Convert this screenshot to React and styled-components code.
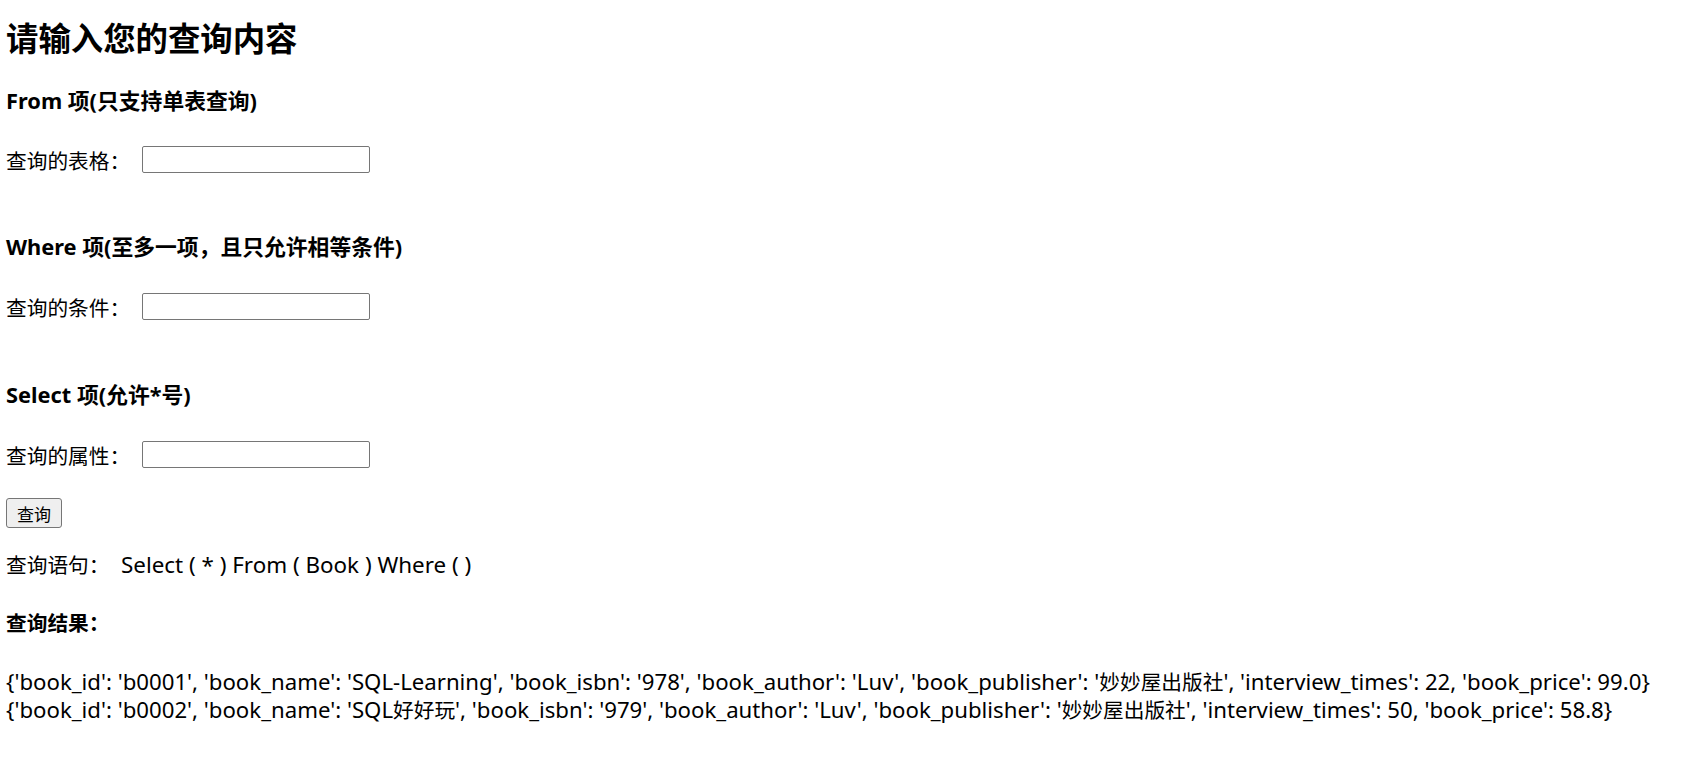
import React from "react";
import styled, { createGlobalStyle } from "styled-components";

const Global = createGlobalStyle`
  html, body { margin: 0; padding: 0; background: #fff; }
  body {
    color: #000;
    font-family: "Noto Sans", "Noto Sans CJK SC", sans-serif;
  }
`;

const Page = styled.div`
  display: flex;
  flex-direction: column;
  align-items: flex-start;
  padding: 0 6px;
`;

const Title = styled.h1`
  margin: 18px 0 0;
  font-size: 32.4px;
  line-height: 40px;
  font-weight: 700;
`;

const Section = styled.h3`
  margin: ${(p) => p.$top}px 0 0;
  font-size: 21.8px;
  line-height: 24px;
  font-weight: 700;
  white-space: nowrap;
`;

const Row = styled.div`
  margin-top: ${(p) => p.$top}px;
  display: flex;
  align-items: center;
  height: 27px;
  font-size: 20.7px;
`;

const Label = styled.span`
  width: 136px;
  white-space: nowrap;
`;

const Field = styled.input`
  box-sizing: border-box;
  width: 228px;
  height: 27px;
  margin: 0;
  padding: 1px 2px;
  border: 1px solid #767676;
  border-radius: 2px;
  background: #fff;
  font-size: 16px;
`;

const Button = styled.button`
  margin-top: 30px;
  box-sizing: border-box;
  width: 56px;
  height: 30px;
  padding: 0;
  border: 1px solid #767676;
  border-radius: 3px;
  background: #efefef;
  color: #000;
  font-family: "Noto Sans CJK SC", sans-serif;
  font-size: 17px;
`;

const Statement = styled.p`
  margin: 24px 0 0;
  font-size: 22.4px;
  line-height: 26px;
  display: flex;
  white-space: nowrap;
`;

const StatementLabel = styled.span`
  width: 115px;
  font-size: 20.7px;
`;

const ResultTitle = styled.p`
  margin: 32px 0 0;
  font-size: 20.7px;
  line-height: 26px;
  font-weight: 700;
`;

const Results = styled.div`
  margin-top: 32px;
  font-size: 22.2px;
  line-height: 27px;
  white-space: nowrap;
`;

const Han = styled.span`
  font-size: 20.7px;
`;

const CJK = /([\u3000-\u303f\u4e00-\u9fff\uff00-\uffef]+)/;

function Mixed({ text }) {
  return text
    .split(CJK)
    .map((part, i) => (i % 2 === 1 ? <Han key={i}>{part}</Han> : part));
}

const rows = [
  "{'book_id': 'b0001', 'book_name': 'SQL-Learning', 'book_isbn': '978', 'book_author': 'Luv', 'book_publisher': '妙妙屋出版社', 'interview_times': 22, 'book_price': 99.0}",
  "{'book_id': 'b0002', 'book_name': 'SQL好好玩', 'book_isbn': '979', 'book_author': 'Luv', 'book_publisher': '妙妙屋出版社', 'interview_times': 50, 'book_price': 58.8}",
];

export default function App() {
  return (
    <>
      <Global />
      <Page>
        <Title>请输入您的查询内容</Title>
        <Section $top={31}>From 项(只支持单表查询)</Section>
        <Row $top={33}>
          <Label>查询的表格：</Label>
          <Field type="text" />
        </Row>
        <Section $top={62}>Where 项(至多一项，且只允许相等条件)</Section>
        <Row $top={34}>
          <Label>查询的条件：</Label>
          <Field type="text" />
        </Row>
        <Section $top={63}>Select 项(允许*号)</Section>
        <Row $top={34}>
          <Label>查询的属性：</Label>
          <Field type="text" />
        </Row>
        <Button>查询</Button>
        <Statement>
          <StatementLabel>查询语句：</StatementLabel>
          <span>Select ( * ) From ( Book ) Where ( )</span>
        </Statement>
        <ResultTitle>查询结果：</ResultTitle>
        <Results>
          {rows.map((r, i) => (
            <div key={i}>
              <Mixed text={r} />
            </div>
          ))}
        </Results>
      </Page>
    </>
  );
}
